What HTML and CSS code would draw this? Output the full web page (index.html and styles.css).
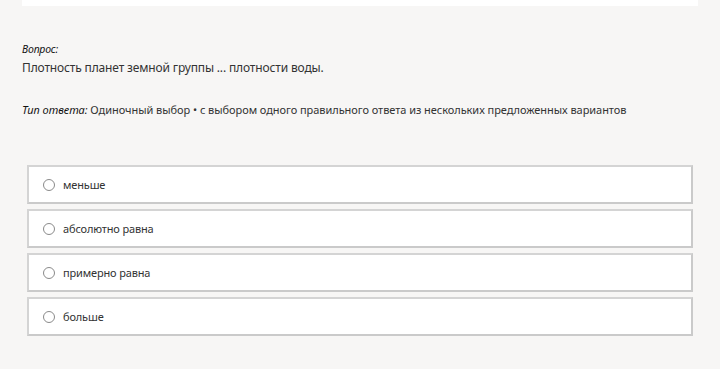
FILE: index.html
```html
<!DOCTYPE html>
<html>
<head>
	<meta charset="utf-8">
	<title>Вопрос</title>
	<link rel="stylesheet" href="styles.css">
</head>
<body>

<div class="page">
	<div class="top-card"></div>

	<div class="question">
		<div class="question-label">Вопрос:</div>
		<div class="question-text">Плотность планет земной группы ... плотности воды.</div>
	</div>

	<div class="answer-type">
		<span class="answer-type-label">Тип ответа:</span> Одиночный выбор • с выбором одного правильного ответа из нескольких предложенных вариантов
	</div>

	<div class="options">
		<label class="option"><span class="radio"></span>меньше</label>
		<label class="option"><span class="radio"></span>абсолютно равна</label>
		<label class="option"><span class="radio"></span>примерно равна</label>
		<label class="option"><span class="radio"></span>больше</label>
	</div>
</div>

</body>
</html>
```

FILE: styles.css
```css
* {
	box-sizing: border-box;
}

body {
	margin: 0;
	background: #f7f6f5;
	color: #222;
	font-family: "Noto Sans", "Open Sans", sans-serif;
	font-size: 12px;
}

.page {
	padding: 0 22px;
}

.top-card {
	height: 6px;
	background: white;
}

.question {
	padding-top: 36px;
}

.question-label {
	font-style: italic;
	font-size: 10.5px;
	line-height: 15px;
	letter-spacing: -0.2px;
	color: #111;
}

.question-text {
	font-size: 12px;
	line-height: 21px;
	letter-spacing: -0.15px;
	color: #333;
}

.answer-type {
	margin-top: 24px;
	font-size: 11px;
	line-height: 16px;
	letter-spacing: -0.05px;
	color: #333;
}

.answer-type-label {
	font-style: italic;
	color: #111;
}

.options {
	margin: 47px 5px 0 5px;
	display: flex;
	flex-direction: column;
	gap: 5px;
}

.option {
	display: flex;
	align-items: center;
	height: 39px;
	padding-left: 14px;
	background: white;
	border: 2px solid #cacaca;
	border-top-color: #d4d4d4;
	border-left-color: #d4d4d4;
	font-size: 11px;
	letter-spacing: -0.15px;
	color: #333;
}

.radio {
	width: 12px;
	height: 12px;
	border: 1px solid #8a8a8a;
	border-radius: 50%;
	margin-right: 8px;
	background: white;
}
```
